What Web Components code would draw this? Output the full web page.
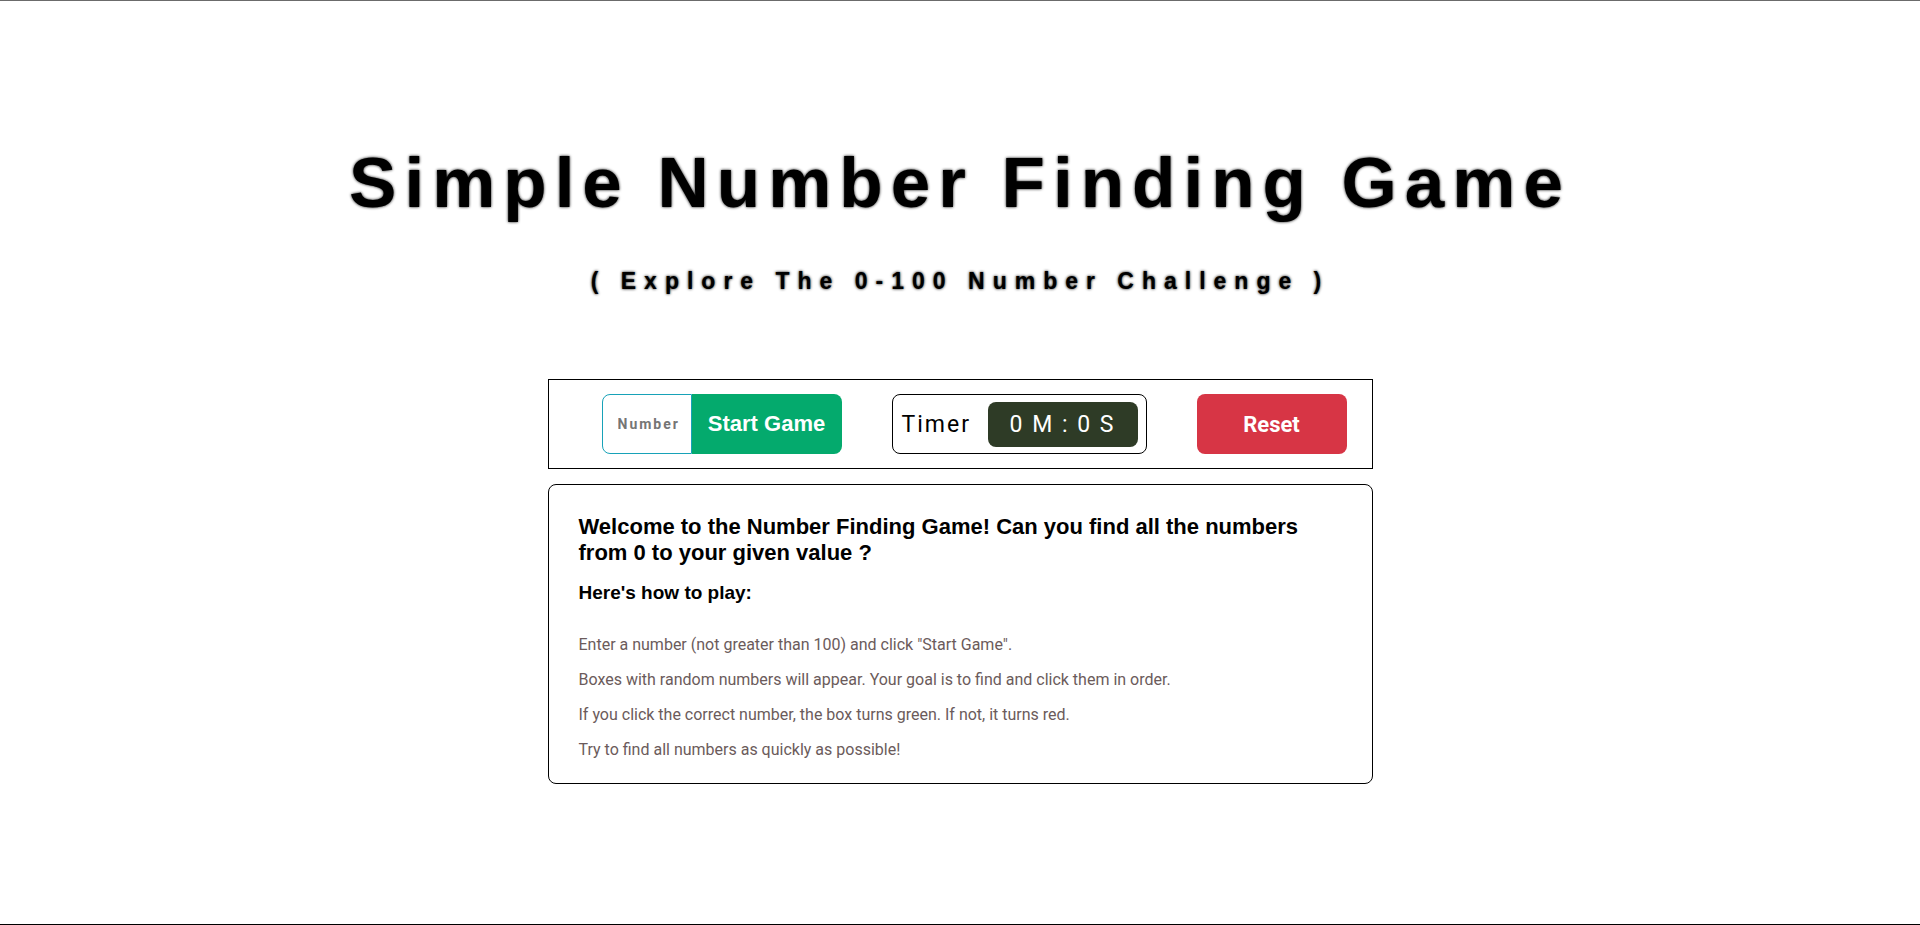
<!DOCTYPE html>
<html lang="en">
<head>
<meta charset="utf-8">
<meta name="viewport" content="width=device-width, initial-scale=1">
<title>Simple Number Finding Game</title>
<style>
  body { margin: 0; background: #fff; color: #000; font-family: "Liberation Sans", Arial, sans-serif; }
</style>
</head>
<body>
<game-page>
  <game-heading slot="heading">
    <span slot="title">Simple Number Finding Game</span>
    <span slot="subtitle">( Explore The 0-100 Number Challenge )</span>
  </game-heading>
  <control-bar>
    <start-form></start-form>
    <game-timer>Timer</game-timer>
    <reset-button>Reset</reset-button>
  </control-bar>
  <game-guide></game-guide>
</game-page>

<script>
const define = (name, html, setup) => {
  const template = document.createElement('template');
  template.innerHTML = html;
  customElements.define(name, class extends HTMLElement {
    constructor() {
      super();
      this.attachShadow({ mode: 'open' }).append(template.content.cloneNode(true));
      if (setup) setup(this, this.shadowRoot);
    }
  });
};

define('game-page', `
  <style>
    :host { display: flex; flex-direction: column; align-items: center; justify-content: center;
      box-sizing: border-box; min-height: 100vh; border-top: 1px solid #6b6b6b; border-bottom: 1px solid #000; }
    main { display: grid; gap: 15px; width: 100%; max-width: 825px; }
  </style>
  <slot name="heading"></slot>
  <main><slot></slot></main>`);

define('game-heading', `
  <style>
    :host { display: block; text-align: center; margin-bottom: 84px; letter-spacing: 8px; text-shadow: 0 0 3px #000; }
    h1, h2 { margin: 0; font-weight: bold; }
    h1 { font-size: 71px; line-height: 84px; margin-bottom: 42px; }
    h2 { font-size: 23px; line-height: 28px; }
  </style>
  <h1><slot name="title"></slot></h1>
  <h2><slot name="subtitle"></slot></h2>`);

define('control-bar', `
  <style>
    :host { display: flex; flex-wrap: wrap; justify-content: flex-end; gap: 15px 50px;
      box-sizing: border-box; padding: 14px 25px; border: 1px solid #000; }
  </style>
  <slot></slot>`);

define('start-form', `
  <style>
    :host { display: block; }
    form { display: flex; height: 60px; margin: 0; }
    input { box-sizing: border-box; width: 90px; margin: 0; padding: 0 0 0 15px; border: 1px solid #17a2b8;
      border-radius: 8px 0 0 8px; outline: none; background: #fff; color: #000;
      font: bold 14px Roboto, sans-serif; letter-spacing: 2px; appearance: textfield; }
    input::-webkit-inner-spin-button { display: none; }
    input::placeholder { color: #757575; }
    button { width: 150px; padding: 0; border: 0; border-radius: 0 8px 8px 0; background: #04aa6d; color: #fff;
      font: bold 22px "Liberation Sans", Arial, sans-serif; cursor: pointer; }
  </style>
  <form>
    <input type="number" min="0" max="100" placeholder="Number" aria-label="Number">
    <button type="submit">Start Game</button>
  </form>`, (host, root) => {
    root.querySelector('form').addEventListener('submit', event => event.preventDefault());
  });

define('game-timer', `
  <style>
    :host { display: flex; align-items: center; justify-content: space-between; box-sizing: border-box;
      width: 255px; height: 60px; padding: 0 8px 0 9px; border: 1px solid #000; border-radius: 8px;
      font: 23px Roboto, sans-serif; letter-spacing: 2px; }
    output { width: 150px; border-radius: 8px; background: #2e3b26; color: #fff; line-height: 45px; text-align: center; }
  </style>
  <label for="clock"><slot></slot></label>
  <output id="clock">0 M : 0 S</output>`);

define('reset-button', `
  <style>
    :host { display: block; }
    button { width: 150px; height: 60px; padding: 0; border: 0; border-radius: 8px; background: #d73545; color: #fff;
      font: bold 22px Roboto, sans-serif; cursor: pointer; }
  </style>
  <button type="button"><slot></slot></button>`, (host, root) => {
    root.querySelector('button').addEventListener('click', () => {
      document.querySelector('start-form').shadowRoot.querySelector('form').reset();
    });
  });

define('game-guide', `
  <style>
    :host { display: block; box-sizing: border-box; padding: 29px 30px 16px; border: 1px solid #000; border-radius: 8px; }
    h2, h3 { margin: 0; font-weight: bold; }
    h2 { font-size: 22px; line-height: 26px; margin-bottom: 16px; }
    h3 { font-size: 19px; line-height: 22px; margin-bottom: 23px; }
    ul { margin: 0; padding: 0; list-style: none; color: #6b5b5b; font: 16px/35px Roboto, sans-serif; }
  </style>
  <h2>Welcome to the Number Finding Game! Can you find all the numbers from 0 to your given value ?</h2>
  <h3>Here's how to play:</h3>
  <ul>
    <li>Enter a number (not greater than 100) and click "Start Game".</li>
    <li>Boxes with random numbers will appear. Your goal is to find and click them in order.</li>
    <li>If you click the correct number, the box turns green. If not, it turns red.</li>
    <li>Try to find all numbers as quickly as possible!</li>
  </ul>`);
</script>
</body>
</html>
